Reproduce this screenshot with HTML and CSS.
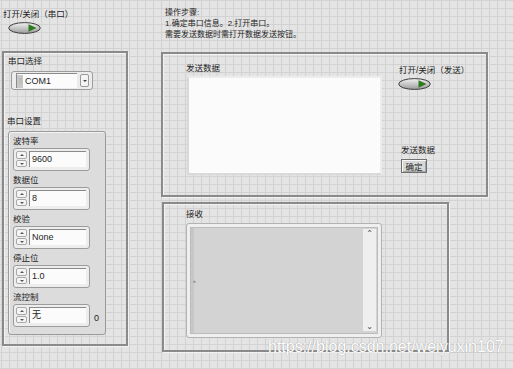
FILE: index.html
```html
<!DOCTYPE html>
<html lang="zh-CN">
<head>
    <meta charset="UTF-8">
    <meta name="viewport" content="width=device-width, initial-scale=1.0">
    <title>串口调试</title>
    <link rel="stylesheet" href="styles.css">
</head>
<body>
    <div class="front">
        <div class="col-left">
            <div class="lbl bool-lbl">打开/关闭（串口）</div>
            <svg class="toggle" viewBox="0 0 33 12" width="33" height="12">
                <defs>
                    <linearGradient id="tg" x1="0" y1="0" x2="0" y2="1">
                        <stop offset="0" stop-color="#f2f2f2"/>
                        <stop offset="1" stop-color="#9c9c9c"/>
                    </linearGradient>
                </defs>
                <ellipse cx="16.5" cy="6" rx="15.8" ry="5.4" fill="url(#tg)" stroke="#3e3e3e" stroke-width="1"/>
                <polygon points="20.5,2.2 28.5,6 20.5,9.8" fill="#2e7a1d"/>
            </svg>

            <div class="deco left-box">
                <div class="lbl port-lbl">串口选择</div>
                <div class="combo">
                    <div class="combo-field"><span class="io">I/O</span><span class="val">COM1</span></div>
                    <div class="combo-btn"></div>
                </div>

                <div class="lbl set-lbl">串口设置</div>
                <div class="cluster">
                    <div class="item">
                        <div class="lbl">波特率</div>
                        <div class="numeric"><div class="spin"><i class="up"></i><i class="dn"></i></div><div class="num-field">9600</div></div>
                    </div>
                    <div class="item">
                        <div class="lbl">数据位</div>
                        <div class="numeric"><div class="spin"><i class="up"></i><i class="dn"></i></div><div class="num-field">8</div></div>
                    </div>
                    <div class="item">
                        <div class="lbl">校验</div>
                        <div class="numeric"><div class="spin"><i class="up"></i><i class="dn"></i></div><div class="num-field">None</div></div>
                    </div>
                    <div class="item">
                        <div class="lbl">停止位</div>
                        <div class="numeric"><div class="spin"><i class="up"></i><i class="dn"></i></div><div class="num-field">1.0</div></div>
                    </div>
                    <div class="item">
                        <div class="lbl">流控制</div>
                        <div class="row">
                            <div class="numeric"><div class="spin"><i class="up"></i><i class="dn"></i></div><div class="num-field">无</div></div>
                            <span class="zero">0</span>
                        </div>
                    </div>
                </div>
            </div>
        </div>

        <div class="col-right">
            <div class="notes">
                操作步骤:<br>
                1.确定串口信息。2.打开串口。<br>
                需要发送数据时需打开数据发送按钮。
            </div>

            <div class="deco send-box">
                <div class="send-main">
                    <div class="lbl">发送数据</div>
                    <div class="send-text"></div>
                </div>
                <div class="send-side">
                    <div class="lbl">打开/关闭（发送）</div>
                    <svg class="toggle toggle-send" viewBox="0 0 33 12" width="33" height="12">
                        <ellipse cx="16.5" cy="6" rx="15.8" ry="5.4" fill="url(#tg)" stroke="#3e3e3e" stroke-width="1"/>
                        <polygon points="20.5,2.2 28.5,6 20.5,9.8" fill="#2e7a1d"/>
                    </svg>
                    <div class="lbl ok-lbl">发送数据</div>
                    <button class="ok-btn">确定</button>
                </div>
            </div>

            <div class="deco recv-box">
                <div class="lbl">接收</div>
                <div class="recv">
                    <div class="recv-inner">
                        <div class="recv-text"><span class="mark">»</span></div>
                        <div class="scroll">
                            <span class="chev">&#8963;</span>
                            <span class="chev">&#8964;</span>
                        </div>
                    </div>
                </div>
            </div>
        </div>
    </div>

    <div class="watermark">https://blog.csdn.net/weiyuxin107</div>
</body>
</html>
```

FILE: styles.css
```css
/* Reset */
* {
    margin: 0;
    padding: 0;
    box-sizing: border-box;
}

/* Front panel grid */
body {
    width: 513px;
    height: 369px;
    overflow: hidden;
    position: relative;
    font-family: "Liberation Sans", "Noto Sans CJK SC", sans-serif;
    font-size: 8.5px;
    color: #1e1e1e;
    background-color: #e4e4e4;
    background-image:
        linear-gradient(#d2d2d2 1px, transparent 1px),
        linear-gradient(90deg, #d2d2d2 1px, transparent 1px);
    background-size: 8px 8px;
    background-position: 1px 0;
}

.front {
    display: flex;
}

.lbl {
    line-height: 11px;
    white-space: nowrap;
}

/* Left column */
.col-left {
    width: 161px;
    padding-left: 2px;
}

.bool-lbl {
    margin: 9px 0 0 1px;
}

.toggle {
    display: block;
    margin: 2px 0 0 6px;
}

.deco {
    border: 2px solid #8a8a8a;
    box-shadow: inset 1px 1px 0 #f3f3f3, 1px 1px 0 #f3f3f3;
}

.left-box {
    width: 126px;
    height: 295px;
    margin-top: 17px;
    padding-top: 3px;
}

.port-lbl {
    margin-left: 4px;
}

/* Ring / combo */
.combo {
    display: flex;
    align-items: center;
    gap: 3px;
    width: 82px;
    height: 19px;
    margin: 4px 0 0 7px;
    padding: 0 3px 0 4px;
    background: #ececec;
    border: 1px solid #9c9c9c;
    border-radius: 3px;
}

.combo-field {
    display: flex;
    align-items: center;
    width: 62px;
    height: 15px;
    background: #fbfbfb;
    border-top: 1px solid #8a8a8a;
    border-left: 1px solid #8a8a8a;
}

.io {
    display: flex;
    align-items: center;
    justify-content: center;
    width: 6px;
    height: 13px;
    margin-right: 2px;
    background: #c8c8c8;
    color: #a2a2a2;
    font-size: 4px;
    line-height: 6px;
    writing-mode: vertical-rl;
}

.val {
    font-size: 9px;
}

.combo-btn {
    position: relative;
    width: 9px;
    height: 13px;
    background: #f3f3f3;
    border: 1px solid #9a9a9a;
    border-radius: 2px;
}

.combo-btn::after {
    content: "";
    position: absolute;
    left: 2px;
    top: 5px;
    border-left: 2px solid transparent;
    border-right: 2px solid transparent;
    border-top: 2px solid #444;
}

.set-lbl {
    margin: 26px 0 0 3px;
}

/* Cluster */
.cluster {
    width: 98px;
    height: 204px;
    margin: 4px 0 0 4px;
    padding: 4px 0 0 4px;
    background: #dcdcdc;
    border: 1px solid #9a9a9a;
    border-radius: 3px;
    box-shadow: inset 1px 1px 0 #f2f2f2;
}

.item {
    margin-bottom: 4px;
}

.item .lbl {
    margin-bottom: 1px;
}

.row {
    display: flex;
    align-items: flex-end;
    gap: 4px;
}

.numeric {
    display: flex;
    gap: 2px;
    width: 77px;
    height: 23px;
    padding: 2px 3px 3px 2px;
    background: #ededed;
    border: 1px solid #9c9c9c;
    border-radius: 3px;
}

.spin {
    display: flex;
    flex-direction: column;
    gap: 1px;
    width: 11px;
}

.spin i {
    position: relative;
    flex: 1;
    background: #f4f4f4;
    border: 1px solid #a9a9a9;
    border-radius: 2px;
}

.spin i::after {
    content: "";
    position: absolute;
    left: 2.5px;
    top: 2px;
    border-left: 2px solid transparent;
    border-right: 2px solid transparent;
}

.spin .up::after {
    border-bottom: 2px solid #555;
}

.spin .dn::after {
    border-top: 2px solid #555;
}

.num-field {
    width: 57px;
    padding-left: 2px;
    background: #fbfbfb;
    border-top: 1px solid #8a8a8a;
    border-left: 1px solid #8a8a8a;
    font-size: 9px;
    line-height: 15px;
}

.zero {
    font-size: 9px;
    line-height: 11px;
    margin-bottom: 3px;
}

/* Right column */
.col-right {
    display: flex;
    flex-direction: column;
    align-items: flex-start;
}

.notes {
    margin: 7px 0 0 4px;
    font-size: 8px;
    line-height: 11px;
}

.send-box {
    display: flex;
    width: 327px;
    height: 145px;
    margin-top: 12px;
    padding-top: 9px;
}

.send-main {
    margin-left: 23px;
}

.send-text {
    width: 195px;
    height: 99px;
    margin: 2px 0 0 1px;
    background: #fbfbfb;
    border: 2px solid #d9d9d9;
    border-top-color: #ececec;
    border-right-color: #ececec;
}

.send-side {
    display: flex;
    flex-direction: column;
    align-items: flex-start;
    margin: 2px 0 0 17px;
}

.toggle-send {
    margin: 2px 0 0 -1px;
}

.ok-lbl {
    margin: 55px 0 0 2px;
}

.ok-btn {
    width: 26px;
    height: 14px;
    margin: 3px 0 0 2px;
    font: inherit;
    font-family: "Noto Sans CJK SC", sans-serif;
    line-height: 11px;
    color: #1e1e1e;
    background: #d7d7d7;
    border: 1px solid #6f6f6f;
    box-shadow: inset 1px 1px 0 #f6f6f6, inset -1px -1px 0 #a4a4a4;
}

.recv-box {
    width: 287px;
    height: 150px;
    margin: 5px 0 0 1px;
    padding: 5px 0 0 22px;
}

/* String indicator */
.recv {
    width: 196px;
    height: 115px;
    margin-top: 3px;
    padding: 3px;
    background: #efefef;
    border: 1px solid #b2b2b2;
    border-radius: 3px;
}

.recv-inner {
    display: flex;
    height: 100%;
    background: #d3d3d3;
    border: 1px solid #bcbcbc;
}

.recv-text {
    flex: 1;
    display: flex;
    align-items: center;
    box-shadow: inset 3px 0 0 #c7c7c7;
}

.mark {
    margin-left: 2px;
    font-size: 5px;
    color: #666;
}

.scroll {
    display: flex;
    flex-direction: column;
    justify-content: space-between;
    align-items: center;
    width: 13px;
    margin: 1px 1px 2px 0;
    background: #efefef;
}

.chev {
    font-family: "DejaVu Sans", sans-serif;
    font-size: 8px;
    line-height: 9px;
    color: #444;
}

/* Blog watermark */
.watermark {
    position: absolute;
    left: 268px;
    top: 338px;
    font-family: "Liberation Sans", sans-serif;
    font-size: 16px;
    color: #ffffff;
    text-shadow: 0 0 1px rgba(110, 110, 110, 0.7);
}
```
